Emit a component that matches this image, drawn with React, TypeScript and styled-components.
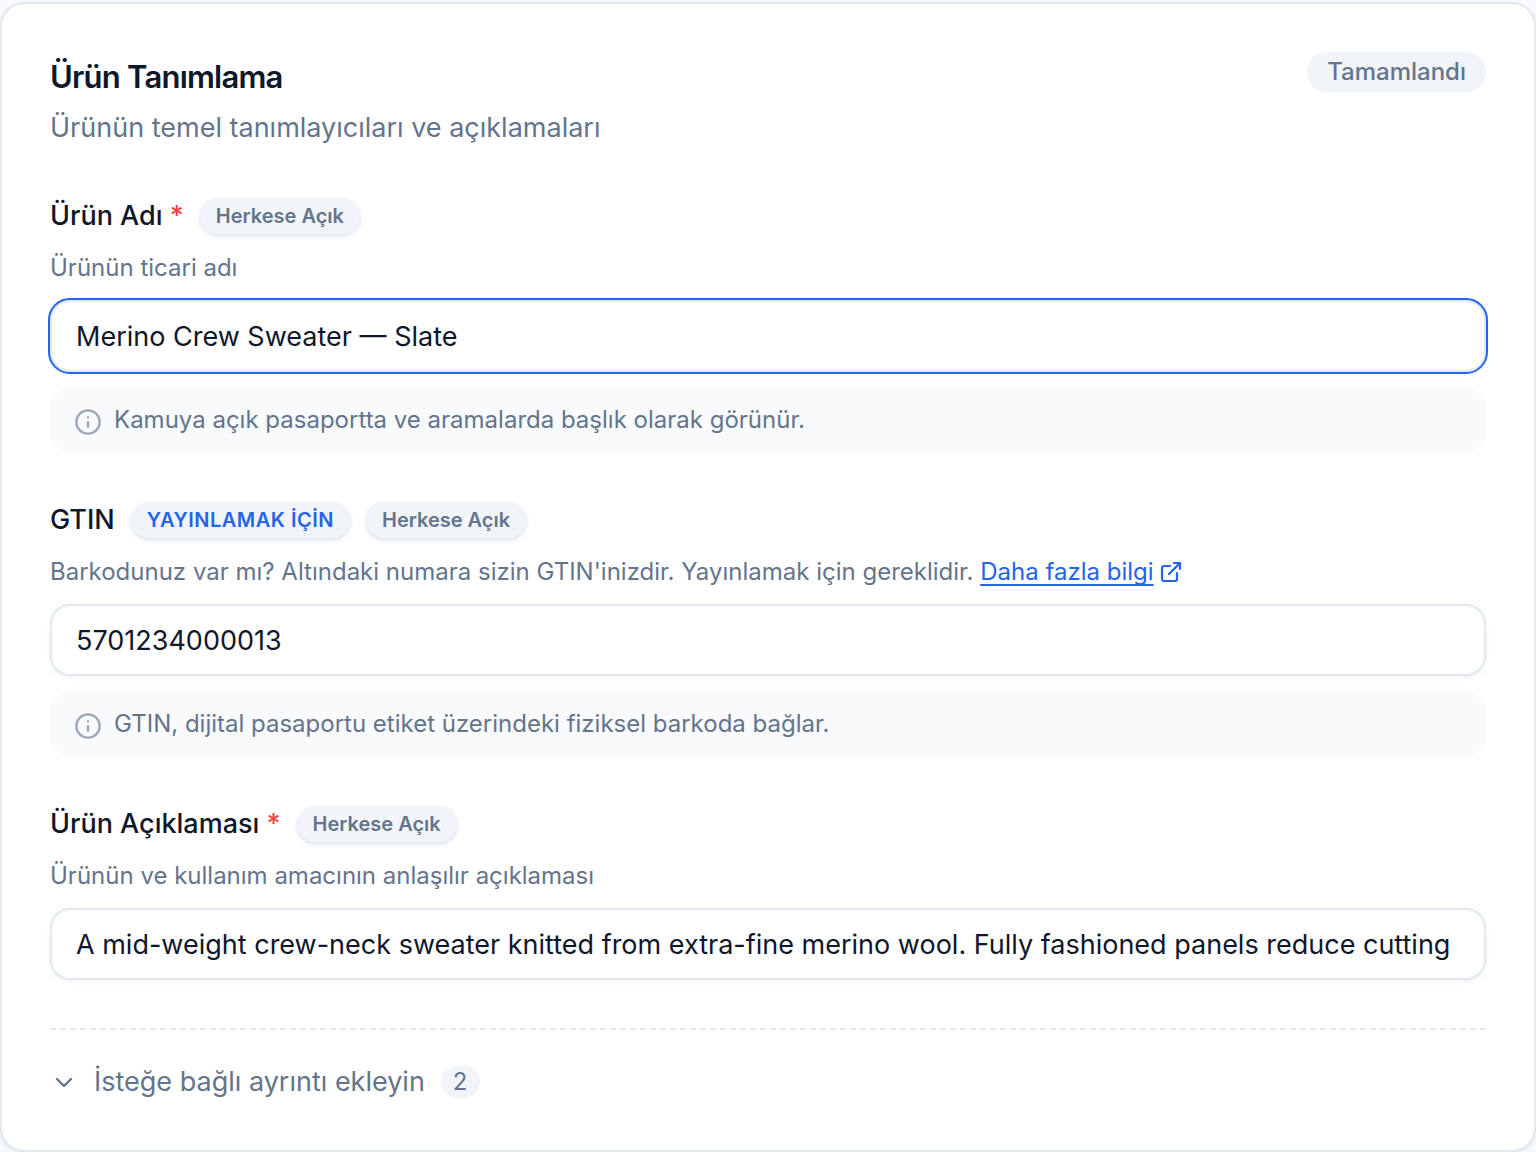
import React from "react";
import styled, { createGlobalStyle } from "styled-components";

const Global = createGlobalStyle`
  * { box-sizing: border-box; }
  body {
    margin: 0;
    background: #f8fafc;
    font-family: Inter, "Noto Sans", sans-serif;
    color: #0f172a;
  }
`;
const Card = styled.main`
  margin-top: 2px;
  padding: 48px;
  border: 2px solid #e2e8f0;
  border-radius: 24px;
  background: #fff;
  box-shadow: 0 2px 4px rgba(51, 85, 136, 0.1);
`;
const Header = styled.header`
  display: flex;
  justify-content: space-between;
  align-items: flex-start;
  margin-bottom: 48px;
`;
const Title = styled.h1`
  margin: 0;
  font-size: 31px;
  line-height: 50px;
  font-weight: 600;
  letter-spacing: -0.025em;
`;
const Subtitle = styled.p`
  margin: 6px 0 0;
  font-size: 27px;
  line-height: 40px;
  color: #64748b;
`;
const Status = styled.span`
  padding: 0 20px;
  border-radius: 20px;
  background: #f1f5f9;
  color: #64748b;
  font-size: 24px;
  line-height: 40px;
  font-weight: 500;
`;
const Field = styled.section`
  margin-bottom: 48px;
`;
const LabelRow = styled.div`
  display: flex;
  align-items: center;
  gap: 16px;
  height: 40px;
`;
const Label = styled.label`
  font-size: 27px;
  line-height: 40px;
  font-weight: 500;
`;
const Star = styled.span`
  color: #ef4444;
`;
const Badge = styled.span<{ $accent?: boolean }>`
  padding: 0 16px;
  border-radius: 18px;
  background: #f1f5f9;
  box-shadow: 0 2px 4px rgba(51, 85, 136, 0.18);
  color: ${(p) => (p.$accent ? "#2563eb" : "#64748b")};
  font-size: 20px;
  line-height: 36px;
  font-weight: 600;
  letter-spacing: ${(p) => (p.$accent ? "0.025em" : "normal")};
`;
const Help = styled.p`
  margin: 12px 0;
  font-size: 24px;
  line-height: 40px;
  color: #64748b;
`;
const HelpLink = styled.a`
  display: inline-flex;
  align-items: center;
  gap: 6px;
  color: #2563eb;
  text-decoration: none;
`;
const LinkText = styled.span`
  text-decoration: underline;
  text-decoration-thickness: 2px;
  text-underline-offset: 4px;
  text-decoration-skip-ink: none;
`;
const Input = styled.input<{ $active?: boolean }>`
  display: block;
  width: 100%;
  height: 72px;
  padding: 0 24px;
  border: 2px solid #e2e8f0;
  border-radius: 20px;
  outline: ${(p) => (p.$active ? "2px solid #2563eb" : "none")};
  background: #fff;
  box-shadow: 0 2px 4px rgba(51, 85, 136, 0.08);
  font: 400 27px/40px Inter, "Noto Sans", sans-serif;
  color: #0f172a;

  &:focus {
    outline: 2px solid #2563eb;
  }
`;
const Hint = styled.div`
  display: flex;
  align-items: flex-start;
  gap: 12px;
  margin-top: 16px;
  padding: 12px 24px;
  border-radius: 20px;
  background: #f8fafc;
  color: #64748b;
  font-size: 24px;
  line-height: 40px;
`;
const HintIcon = styled.svg`
  flex: none;
  width: 28px;
  height: 28px;
  margin-top: 8px;
  color: #9ca6b6;
`;
const Footer = styled.footer`
  padding-top: 32px;
  border-top: 2px dashed #e2e8f0;
`;
const Toggle = styled.button`
  display: flex;
  align-items: center;
  gap: 16px;
  padding: 0;
  border: 0;
  background: none;
  color: #64748b;
  font: 400 27px/40px Inter, "Noto Sans", sans-serif;
  cursor: pointer;
`;
const Count = styled.span`
  padding: 0 12px;
  border-radius: 16px;
  background: #f1f5f9;
  font-size: 24px;
  line-height: 32px;
`;

const stroke = {
  fill: "none",
  stroke: "currentColor",
  strokeLinecap: "round",
  strokeLinejoin: "round",
} as const;

const InfoIcon = () => (
  <HintIcon viewBox="0 0 24 24" {...stroke} strokeWidth={2} aria-hidden="true">
    <circle cx="12" cy="12" r="10" />
    <path d="M12 16v-4M12 8h.01" />
  </HintIcon>
);
const ExternalIcon = () => (
  <svg width="22" height="22" viewBox="0 0 22 22" {...stroke} strokeWidth={2.2} aria-hidden="true">
    <path d="M14 2h6v6M20 2 9 13M17 12v6a2 2 0 0 1-2 2H4a2 2 0 0 1-2-2V7a2 2 0 0 1 2-2h6" />
  </svg>
);
const Chevron = () => (
  <svg width="28" height="28" viewBox="0 0 28 28" {...stroke} strokeWidth={2.4} aria-hidden="true">
    <path d="m7 11 7 7 7-7" />
  </svg>
);

export default function App() {
  return (
    <>
      <Global />
      <Card>
        <Header>
          <div>
            <Title>Ürün Tanımlama</Title>
            <Subtitle>Ürünün temel tanımlayıcıları ve açıklamaları</Subtitle>
          </div>
          <Status>Tamamlandı</Status>
        </Header>
        <Field>
          <LabelRow>
            <Label htmlFor="name">Ürün Adı <Star>*</Star></Label>
            <Badge>Herkese Açık</Badge>
          </LabelRow>
          <Help>Ürünün ticari adı</Help>
          <Input id="name" $active defaultValue="Merino Crew Sweater — Slate" />
          <Hint>
            <InfoIcon />
            <span>Kamuya açık pasaportta ve aramalarda başlık olarak görünür.</span>
          </Hint>
        </Field>
        <Field>
          <LabelRow>
            <Label htmlFor="gtin">GTIN</Label>
            <Badge $accent>YAYINLAMAK İÇİN</Badge>
            <Badge>Herkese Açık</Badge>
          </LabelRow>
          <Help>
            Barkodunuz var mı? Altındaki numara sizin GTIN'inizdir. Yayınlamak için gereklidir.{" "}
            <HelpLink href="#gtin">
              <LinkText>Daha fazla bilgi</LinkText>
              <ExternalIcon />
            </HelpLink>
          </Help>
          <Input id="gtin" inputMode="numeric" defaultValue="5701234000013" />
          <Hint>
            <InfoIcon />
            <span>GTIN, dijital pasaportu etiket üzerindeki fiziksel barkoda bağlar.</span>
          </Hint>
        </Field>
        <Field>
          <LabelRow>
            <Label htmlFor="desc">Ürün Açıklaması <Star>*</Star></Label>
            <Badge>Herkese Açık</Badge>
          </LabelRow>
          <Help>Ürünün ve kullanım amacının anlaşılır açıklaması</Help>
          <Input
            id="desc"
            defaultValue="A mid-weight crew-neck sweater knitted from extra-fine merino wool. Fully fashioned panels reduce cutting"
          />
        </Field>
        <Footer>
          <Toggle type="button" aria-expanded="false">
            <Chevron />
            <span>İsteğe bağlı ayrıntı ekleyin</span>
            <Count>2</Count>
          </Toggle>
        </Footer>
      </Card>
    </>
  );
}
